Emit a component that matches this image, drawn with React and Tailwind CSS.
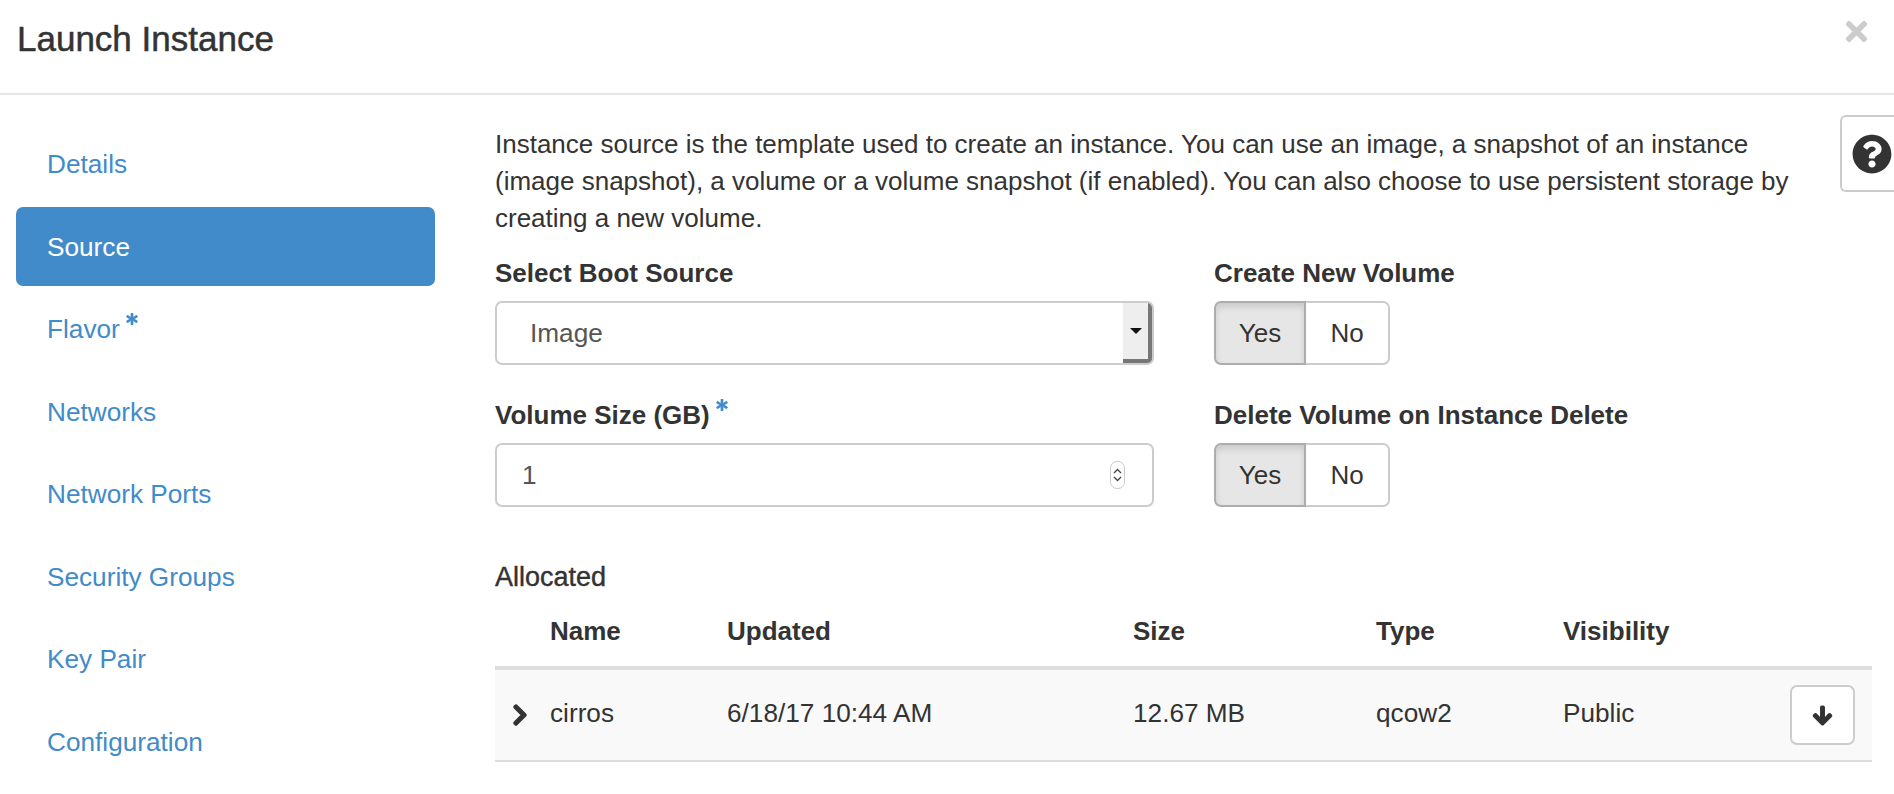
import React from "react";
import { FaTimes, FaQuestionCircle, FaChevronRight, FaArrowDown, FaAsterisk } from "react-icons/fa";

const navItems = [
  { label: "Details" },
  { label: "Source", active: true },
  { label: "Flavor", required: true },
  { label: "Networks" },
  { label: "Network Ports" },
  { label: "Security Groups" },
  { label: "Key Pair" },
  { label: "Configuration" },
];

const Required = () => (
  <FaAsterisk className="inline-block ml-[6px] w-[12px] h-[12px] text-[#428bca] stroke-[30px] align-[13px]" />
);

const YesNo = () => (
  <div className="flex h-[64px] w-[176px] text-[26px] leading-none">
    <div className="w-[92px] flex items-center justify-center bg-[#e6e6e6] border-2 border-[#adadad] rounded-l-[7px] shadow-[inset_0_4px_6px_rgba(0,0,0,0.125)]">
      Yes
    </div>
    <div className="flex-1 flex items-center justify-center bg-white border-2 border-l-0 border-[#ccc] rounded-r-[7px]">
      No
    </div>
  </div>
);

const App = () => {
  return (
    <div className="relative h-[794px] w-[1894px] overflow-hidden bg-white text-[#333] font-['Liberation_Sans',Arial,sans-serif] text-[26.2px] leading-[37px]">
      {/* Header */}
      <div className="h-[95px] border-b-2 border-[#e5e5e5] flex justify-between pl-[17px] pr-[24px] pt-[19px]">
        <h4 className="text-[35px] leading-[40px] [-webkit-text-stroke:0.5px_#333]">Launch Instance</h4>
        <FaTimes className="w-[27px] h-[31px] mt-[-3px] text-[#ccc]" />
      </div>

      {/* Help tab */}
      <div className="absolute right-0 top-[115px] w-[54px] h-[77px] border-2 border-r-0 border-[#ccc] rounded-l-[6px] bg-white flex items-center pl-[10px]">
        <FaQuestionCircle className="w-[40px] h-[40px] text-[#333]" />
      </div>

      <div className="flex pl-[16px] pt-[29px]">
        {/* Wizard nav */}
        <div className="w-[419px] shrink-0 flex flex-col gap-[3.5px]">
          {navItems.map((item) => (
            <div
              key={item.label}
              className={
                item.active
                  ? "h-[79px] pl-[31px] pt-[2px] flex items-center rounded-[7px] bg-[#428bca] text-white"
                  : "h-[79px] pl-[31px] pt-[2px] flex items-center rounded-[7px] text-[#428bca]"
              }
            >
              <span>
                {item.label}
                {item.required && <Required />}
              </span>
            </div>
          ))}
        </div>

        {/* Step content */}
        <div className="ml-[60px] w-[1377px]">
          <p className="w-[1310px] pt-[2px] text-[26px]">
            Instance source is the template used to create an instance. You can use an image, a snapshot of an instance
            (image snapshot), a volume or a volume snapshot (if enabled). You can also choose to use persistent storage by
            creating a new volume.
          </p>

          <div className="mt-[18px] grid grid-cols-[659px_1fr] gap-x-[60px] gap-y-[32px] text-[26px]">
            <div>
              <label className="block font-bold mb-[9px]">Select Boot Source</label>
              <div className="h-[64px] flex border-2 border-[#ccc] rounded-[7px] overflow-hidden text-[#555] text-[26.2px]">
                <div className="flex-1 pl-[33px] flex items-center">Image</div>
                <div className="w-[29px] bg-[#eee] border-r-[4px] border-b-[4px] border-[#777] flex items-center justify-center">
                  <div className="w-0 h-0 border-x-[6px] border-x-transparent border-t-[6px] border-t-[#111]"></div>
                </div>
              </div>
            </div>
            <div>
              <label className="block font-bold mb-[9px]">Create New Volume</label>
              <YesNo />
            </div>
            <div>
              <label className="block font-bold mb-[9px]">
                Volume Size (GB)
                <Required />
              </label>
              <div className="h-[64px] flex items-center justify-between border-2 border-[#ccc] rounded-[7px] pl-[25px] pr-[27px] text-[#555] text-[26.2px]">
                <span>1</span>
                <div className="w-[15px] h-[28px] border border-[#ccc] rounded-[7px] flex flex-col items-center justify-center gap-[2px]">
                  <svg width="9" height="6" viewBox="0 0 9 6" fill="none" stroke="#444" strokeWidth="1.3"><path d="M1 5l3.5-3.5L8 5" /></svg>
                  <svg width="9" height="6" viewBox="0 0 9 6" fill="none" stroke="#444" strokeWidth="1.3"><path d="M1 1l3.5 3.5L8 1" /></svg>
                </div>
              </div>
            </div>
            <div>
              <label className="block font-bold mb-[9px]">Delete Volume on Instance Delete</label>
              <YesNo />
            </div>
          </div>

          <div className="mt-[52px] text-[27px] [-webkit-text-stroke:0.4px_#333]">Allocated</div>
          <table className="table-fixed w-full border-collapse">
            <colgroup>
              <col className="w-[39px]" />
              <col className="w-[177px]" />
              <col className="w-[406px]" />
              <col className="w-[243px]" />
              <col className="w-[187px]" />
              <col />
              <col className="w-[110px]" />
            </colgroup>
            <thead>
              <tr className="h-[72px] border-b-4 border-[#ddd] text-left text-[26px]">
                <th></th>
                <th className="pl-[16px]">Name</th>
                <th className="pl-[16px]">Updated</th>
                <th className="pl-[16px]">Size</th>
                <th className="pl-[16px]">Type</th>
                <th className="pl-[16px]">Visibility</th>
                <th></th>
              </tr>
            </thead>
            <tbody>
              <tr className="h-[93px] bg-[#f9f9f9] border-b-2 border-[#ddd]">
                <td className="pl-[15px]">
                  <FaChevronRight className="w-[20px] h-[24px] stroke-[25px]" />
                </td>
                <td className="pl-[16px] pb-[3px]">cirros</td>
                <td className="pl-[16px] pb-[3px]">6/18/17 10:44 AM</td>
                <td className="pl-[16px] pb-[3px]">12.67 MB</td>
                <td className="pl-[16px] pb-[3px]">qcow2</td>
                <td className="pl-[16px] pb-[3px]">Public</td>
                <td>
                  <div className="ml-[28px] w-[65px] h-[60px] bg-white border-2 border-[#ccc] rounded-[7px] flex items-center justify-center">
                    <FaArrowDown className="w-[21px] h-[21px] stroke-[40px]" />
                  </div>
                </td>
              </tr>
            </tbody>
          </table>
        </div>
      </div>
    </div>
  );
};

export default App;
